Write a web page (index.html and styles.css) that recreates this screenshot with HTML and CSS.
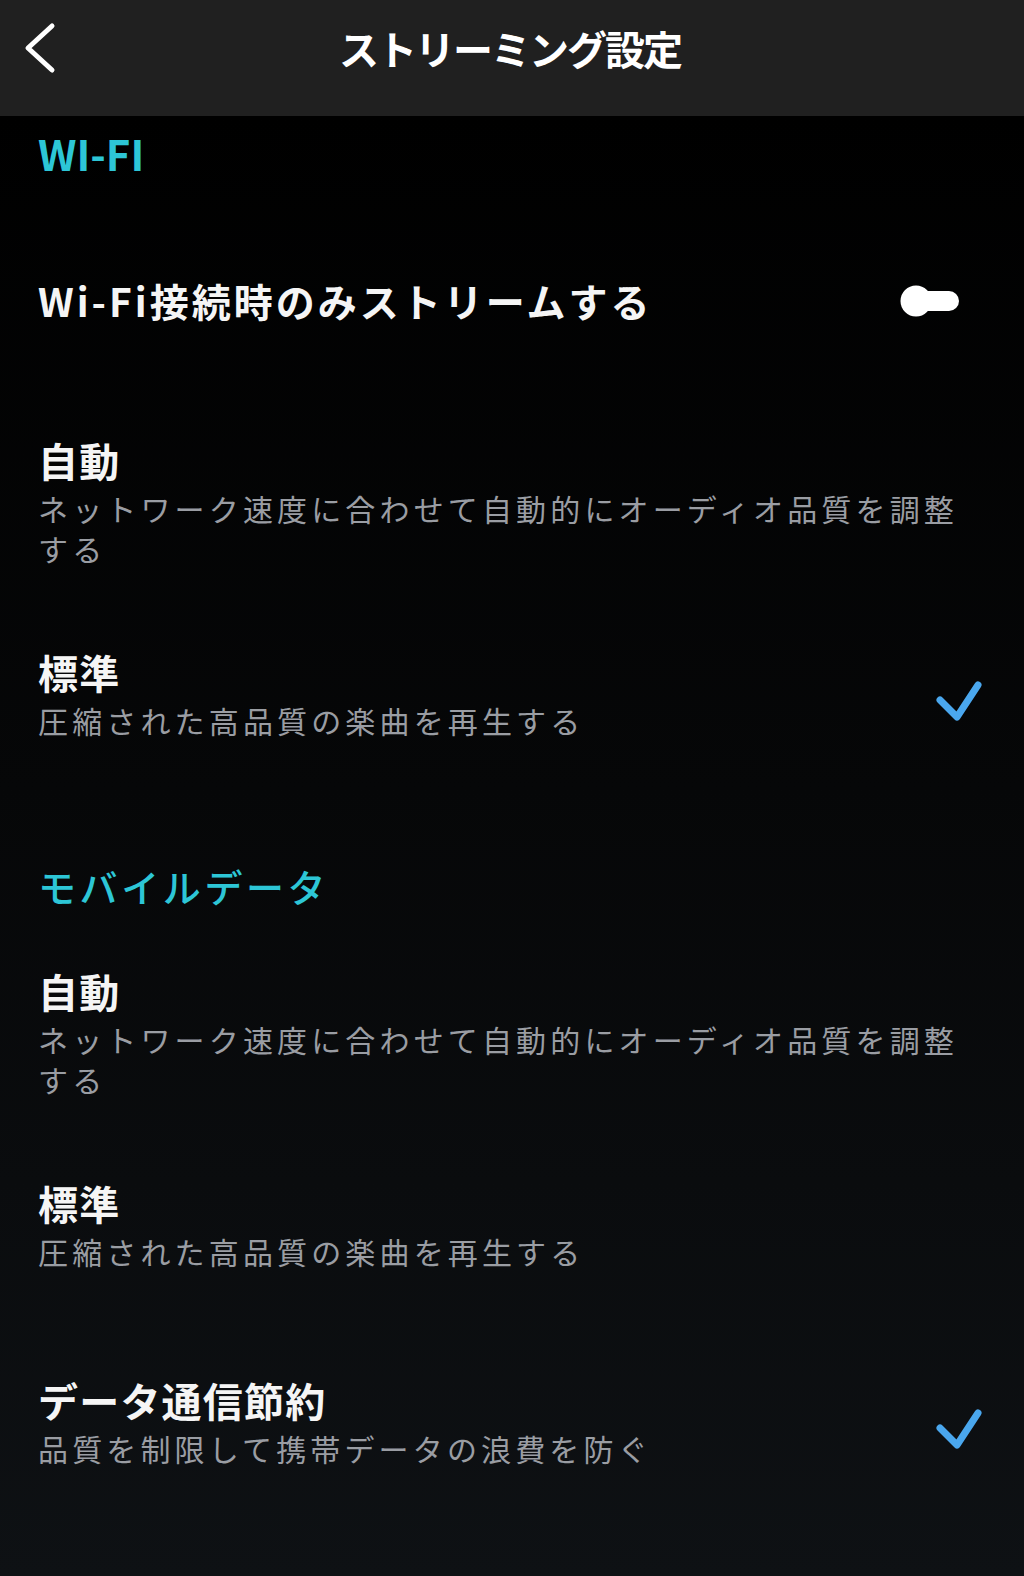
FILE: index.html
```html
<!DOCTYPE html>
<html lang="ja">
<head>
<meta charset="utf-8">
<title>ストリーミング設定</title>
<link rel="stylesheet" href="styles.css">
</head>
<body>
<header class="topbar">
  <svg class="back" width="40" height="56" viewBox="0 0 40 56"><path d="M30 4 L6 26 L30 48" fill="none" stroke="#fff" stroke-width="5" stroke-linecap="round" stroke-linejoin="round"/></svg>
  <h1 class="title">ストリーミング設定</h1>
</header>
<main class="content">
  <h2 class="label label-latin">WI-FI</h2>
  <div class="toggle-row">
    <span class="toggle-text">Wi-Fi接続時のみストリームする</span>
    <svg class="toggle" width="64" height="34" viewBox="0 0 64 34"><rect x="8" y="7" width="51" height="20" rx="10" fill="#fff"/><circle cx="16" cy="17" r="15.5" fill="#fff"/></svg>
  </div>
  <div class="item item-first">
    <div class="text">
      <div class="item-title">自動</div>
      <div class="item-sub">ネットワーク速度に合わせて自動的にオーディオ品質を調整する</div>
    </div>
  </div>
  <div class="item">
    <div class="text">
      <div class="item-title">標準</div>
      <div class="item-sub">圧縮された高品質の楽曲を再生する</div>
    </div>
    <svg class="check" width="50" height="46" viewBox="0 0 50 46"><path d="M6 21 L23 38 L44 6" fill="none" stroke="#4aa7ee" stroke-width="7" stroke-linecap="round" stroke-linejoin="round"/></svg>
  </div>
  <h2 class="label label-jp">モバイルデータ</h2>
  <div class="item item-after-label">
    <div class="text">
      <div class="item-title">自動</div>
      <div class="item-sub">ネットワーク速度に合わせて自動的にオーディオ品質を調整する</div>
    </div>
  </div>
  <div class="item">
    <div class="text">
      <div class="item-title">標準</div>
      <div class="item-sub">圧縮された高品質の楽曲を再生する</div>
    </div>
  </div>
  <div class="item item-last">
    <div class="text">
      <div class="item-title">データ通信節約</div>
      <div class="item-sub">品質を制限して携帯データの浪費を防ぐ</div>
    </div>
    <svg class="check" width="50" height="46" viewBox="0 0 50 46"><path d="M6 21 L23 38 L44 6" fill="none" stroke="#4aa7ee" stroke-width="7" stroke-linecap="round" stroke-linejoin="round"/></svg>
  </div>
</main>
</body>
</html>
```

FILE: styles.css
```css
html {
  background: #0e1114;
}
body {
  margin: 0;
  width: 1024px;
  min-height: 1576px;
  font-family: "Noto Sans CJK JP", "Noto Sans", sans-serif;
  color: #f5f5f5;
  background: linear-gradient(#000 116px, #060708 50%, #0e1114 100%);
}
.topbar {
  position: relative;
  height: 116px;
  background: #202020;
  display: flex;
  justify-content: center;
  align-items: flex-start;
}
.back {
  position: absolute;
  left: 22px;
  top: 22px;
}
.title {
  margin: 24px 0 0 -4px;
  font-size: 40px;
  line-height: 48px;
  font-weight: 700;
  letter-spacing: -2px;
  color: #fff;
}
.content {
  padding: 17px 48px 0 38px;
}
.label {
  margin: 0;
  line-height: 40px;
  color: #2dc6d6;
}
.label-latin {
  font-size: 42px;
  font-weight: 700;
  letter-spacing: 0;
}
.label-jp {
  margin-top: 126px;
  font-size: 38px;
  font-weight: 500;
  letter-spacing: 3.6px;
}
.toggle-row {
  margin-top: 103px;
  display: flex;
  align-items: center;
  justify-content: space-between;
  padding-right: 12px;
  height: 48px;
}
.toggle-text {
  font-size: 39px;
  font-weight: 700;
  line-height: 48px;
  letter-spacing: 3px;
}
.toggle {
  display: block;
  margin-top: 2px;
}
.item {
  display: flex;
  align-items: center;
  margin-top: 80px;
}
.item-first {
  margin-top: 112px;
}
.item-after-label {
  margin-top: 61px;
}
.item-last {
  margin-top: 105px;
}
.text {
  flex: 1;
}
.item-title {
  font-size: 40px;
  font-weight: 700;
  line-height: 48px;
  letter-spacing: 1.2px;
  color: #f5f5f5;
}
.item-sub {
  margin-top: 4px;
  font-size: 30px;
  line-height: 40px;
  letter-spacing: 4.15px;
  color: #9a9da3;
}
.check {
  display: block;
  margin-right: -8px;
  margin-top: 16px;
}
```
